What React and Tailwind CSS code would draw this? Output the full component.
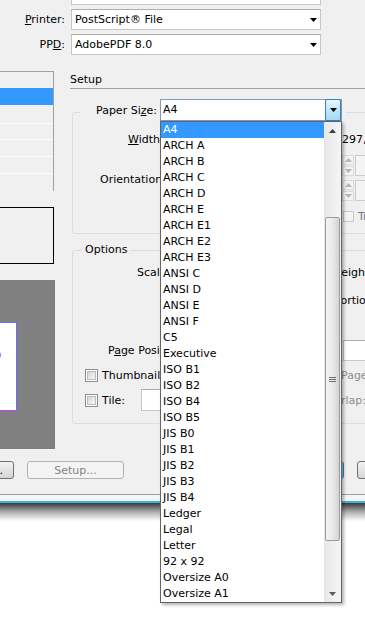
const sizes = [
  'A4', 'ARCH A', 'ARCH B', 'ARCH C', 'ARCH D', 'ARCH E', 'ARCH E1', 'ARCH E2', 'ARCH E3',
  'ANSI C', 'ANSI D', 'ANSI E', 'ANSI F', 'C5', 'Executive', 'ISO B1', 'ISO B2', 'ISO B4',
  'ISO B5', 'JIS B0', 'JIS B1', 'JIS B2', 'JIS B3', 'JIS B4', 'Ledger', 'Legal', 'Letter',
  '92 x 92', 'Oversize A0', 'Oversize A1',
]

function Tri({ up, color = '#000' }) {
  return (
    <svg width="7" height="4" viewBox="0 0 7 4">
      <path d={up ? 'M0 4h7L3.5 0z' : 'M0 0h7L3.5 4z'} fill={color} />
    </svg>
  )
}

function Combo({ text }) {
  return (
    <div className="ml-[6px] w-[250px] h-[21px] shrink-0 flex items-center bg-white border border-[#c7c7c7] border-t-[#adadad]">
      <span className="flex-1 pl-[3px]">{text}</span>
      <span className="mr-[3px] w-[7px] flex justify-center"><Tri /></span>
    </div>
  )
}

function Check() {
  return (
    <div className="w-[13px] h-[13px] shrink-0 border border-[#8e8f8f] bg-white p-[1px]">
      <div className="w-full h-full border border-[#b9bdc2] bg-linear-to-br from-[#d3d6db] to-[#f7f7f7]" />
    </div>
  )
}

function Spin() {
  return (
    <div className="flex h-[21px]">
      <div className="w-[12px] flex flex-col gap-[1px]">
        <div className="flex-1 flex items-center justify-center border border-[#dadada] bg-[#f4f4f4]"><Tri up color="#b4b4b4" /></div>
        <div className="flex-1 flex items-center justify-center border border-[#dadada] bg-[#f4f4f4]"><Tri color="#b4b4b4" /></div>
      </div>
      <div className="ml-[1px] w-[40px] border border-[#c9cdd2] bg-[#f4f4f4]" />
    </div>
  )
}

export default function App() {
  return (
    <div className="relative w-[365px] h-[618px] overflow-hidden bg-white font-['DejaVu_Sans',sans-serif] text-[11px] leading-[13px] text-black">
      <div className="h-[495px] bg-[#f0f0f0] border-b border-[#a0a0a0] flex flex-col">
        {/* name field, cut off at the top */}
        <div className="flex h-[5px] items-end">
          <div className="w-[65px]" />
          <div className="ml-[6px] w-[250px] h-[21px] shrink-0 bg-white border border-[#c7c7c7]" />
        </div>

        <div className="mt-[4px] flex items-center h-[21px]">
          <div className="w-[65px] shrink-0 text-right"><u>P</u>rinter:</div>
          <Combo text="PostScript® File" />
        </div>
        <div className="mt-[4px] flex items-center h-[21px]">
          <div className="w-[65px] shrink-0 text-right">PP<u>D</u>:</div>
          <Combo text="AdobePDF 8.0" />
        </div>

        <div className="mt-[16px] flex">
          {/* left: category list + preview */}
          <div className="w-[54px] shrink-0 flex flex-col">
            <div className="border-t border-r border-[#a0a0a0] flex flex-col">
              <div className="h-[16px]" />
              <div className="h-[17px] bg-[#3399ff]" />
              <div className="h-[19px] border-b border-[#fbfbfb]" />
              <div className="h-[16px] border-b border-[#fbfbfb]" />
              <div className="h-[17px] border-b border-[#fbfbfb]" />
              <div className="h-[17px] border-b border-[#fbfbfb]" />
              <div className="h-[17px]" />
            </div>
            <div className="mt-[16px] -ml-[10px] w-[64px] h-[57px] border border-black" />
            <div className="mt-[16px] w-[55px] h-[169px] bg-[#808080] pt-[42px]">
              <div className="relative -ml-[4px] w-[21px] h-[89px] bg-white border border-[#6b6bff] shadow-[0_1px_0_#e05070]">
                <div className="absolute -left-[6px] top-[27px] w-[10px] h-[10px] rounded-full bg-[#7d7dff]" />
              </div>
            </div>
          </div>

          {/* right: setup */}
          <div className="ml-[16px] w-[320px] shrink-0 flex flex-col">
            <div className="h-[18px] pt-[2px] border-b border-[#a0a0a0]">Setup</div>

            <div className="mt-[23px] ml-[2px] h-[122px] border border-[#d5dfe5] rounded-[3px] flex flex-col">
              <div className="-mt-[14px] ml-[7px] w-max flex items-center h-[22px] bg-[#f0f0f0] pl-[16px] pr-[4px]">
                <div className="w-[64px] shrink-0">Paper Si<u>z</u>e:</div>
                <div className="w-[182px] h-[22px] shrink-0 flex bg-white border border-[#7d9bbd]">
                  <span className="flex-1 pl-[2px] leading-[20px]">A4</span>
                  <span className="w-[16px] -my-[1px] flex items-center justify-center rounded-[2px] border border-[#3c7fb1] bg-linear-to-b from-[#eaf6fd] via-[#bee6fd] to-[#a7d9f5]"><Tri /></span>
                </div>
              </div>
              <div className="flex">
                <div className="w-[269px] shrink-0 flex flex-col whitespace-nowrap">
                  <div className="mt-[12px] pl-[55px]"><u>W</u>idth:</div>
                  <div className="mt-[27px] pl-[27px]">Orientation:</div>
                </div>
                <div className="flex flex-col whitespace-nowrap">
                  <div className="mt-[12px]">297, 210</div>
                  <div className="mt-[9px]"><Spin /></div>
                  <div className="mt-[4px]"><Spin /></div>
                  <div className="mt-[9px] ml-[1px] flex items-center h-[13px]">
                    <div className="w-[11px] h-[11px] shrink-0 border border-[#c9c9c9] bg-[#f4f4f4]" />
                    <span className="ml-[4px] text-[#777789]">Transverse</span>
                  </div>
                </div>
              </div>
            </div>

            <div className="mt-[16px] ml-[2px] h-[174px] border border-[#d5dfe5] rounded-[3px] flex flex-col">
              <div className="-mt-[8px] ml-[9px] w-max px-[3px] bg-[#f0f0f0]">Options</div>
              <div className="flex">
                <div className="w-[269px] shrink-0 flex flex-col whitespace-nowrap">
                  <div className="mt-[10px] pl-[64px]">Scale:</div>
                  <div className="mt-[65px] pl-[35px]">P<u>a</u>ge Position:</div>
                  <div className="mt-[12px] ml-[12px] flex items-center h-[13px]">
                    <Check />
                    <span className="ml-[4px]">Thumbnails:</span>
                  </div>
                  <div className="mt-[7px] ml-[12px] flex items-center h-[22px]">
                    <Check />
                    <span className="ml-[4px]">Tile:</span>
                    <div className="ml-[16px] w-[40px] h-[22px] shrink-0 bg-white border border-[#c7c7c7] border-t-[#adadad]" />
                  </div>
                </div>
                <div className="flex flex-col whitespace-nowrap">
                  <div className="mt-[10px] -ml-[9px]">Height:</div>
                  <div className="mt-[15px] -ml-[26px]">Proportions</div>
                  <div className="mt-[33px] ml-[1px] w-[60px] h-[21px] bg-white border border-[#c7c7c7] border-t-[#adadad]" />
                  <div className="mt-[8px] -ml-[1px] text-[#8d8d8d]">Page</div>
                  <div className="mt-[12px] -ml-[23px] text-[#8d8d8d]">Overlap:</div>
                </div>
              </div>
            </div>
          </div>
        </div>

        {/* buttons */}
        <div className="mt-[12px] flex">
          <div className="-ml-[57px] w-[71px] h-[18px] shrink-0 flex items-center justify-end pr-[10px] rounded-[3px] border border-[#707070] bg-linear-to-b from-[#f2f2f2] to-[#d6d6d6]">...</div>
          <div className="ml-[13px] w-[97px] h-[18px] shrink-0 flex items-center justify-center rounded-[3px] border border-[#adb2b5] bg-[#f4f4f4] text-[#838383]">Setup...</div>
          <div className="ml-[126px] w-[94px] h-[18px] shrink-0 rounded-[3px] border border-[#3c7fb1] bg-linear-to-b from-[#e5f4fc] to-[#a9d7f1] shadow-[inset_0_0_0_1px_#6fd0f2]" />
          <div className="ml-[13px] w-[80px] h-[18px] shrink-0 rounded-[3px] border border-[#707070] bg-linear-to-b from-[#f2f2f2] to-[#d6d6d6]" />
        </div>
      </div>
      <div className="h-[6px] bg-[#f4f5f6]" />
      <div className="h-[2px] bg-[#38b1dc]" />
      <div className="h-[18px] bg-linear-to-b from-[#3c3c3c] via-[#b0b0b0] to-white" />

      {/* paper size drop-down list */}
      <div className="absolute left-[160px] top-[121px] z-10 w-[182px] h-[482px] flex border border-[#646464] bg-white shadow-[2px_2px_3px_rgba(0,0,0,0.3)]">
        <div className="w-[163px] flex flex-col">
          {sizes.map((s, i) => (
            <div key={s} className={`h-[16px] pl-[2px] leading-[16px] ${i === 0 ? 'bg-[#3399ff] text-white' : ''}`}>{s}</div>
          ))}
        </div>
        <div className="w-[17px] flex flex-col bg-linear-to-r from-[#e8e8e8] to-[#f5f5f5]">
          <div className="h-[17px] flex items-center justify-center"><Tri up color="#3a3a3a" /></div>
          <div className="flex-1">
            <div className="mt-[78px] mx-[1px] h-[324px] rounded-[2px] border border-[#9a9a9a] bg-linear-to-r from-[#f4f4f4] via-[#e9e9e9] to-[#d3d3d3] flex flex-col items-center justify-center gap-[1px]">
              <div className="w-[7px] h-[1px] bg-[#6f6f6f]" />
              <div className="w-[7px] h-[1px] bg-[#6f6f6f]" />
              <div className="w-[7px] h-[1px] bg-[#6f6f6f]" />
            </div>
          </div>
          <div className="h-[17px] flex items-center justify-center"><Tri color="#5a5a5a" /></div>
        </div>
      </div>
    </div>
  )
}
